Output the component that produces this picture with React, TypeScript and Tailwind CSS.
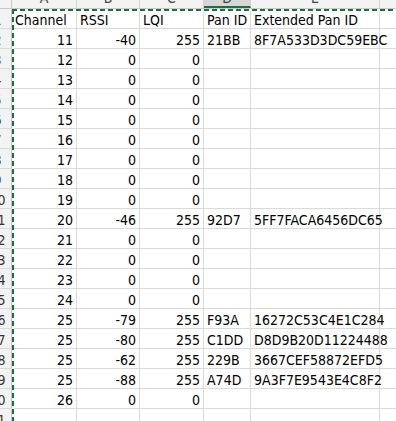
const COLS = [
  { key: 'A', w: 'w-[65px]', align: 'right' },
  { key: 'B', w: 'w-[63px]', align: 'right' },
  { key: 'C', w: 'w-[64px]', align: 'right' },
  { key: 'D', w: 'w-[47px]', align: 'left' },
  { key: 'E', w: 'w-[129px]', align: 'left' },
  { key: 'F', w: 'w-[100px]', align: 'left' },
];

type Row = (string | number)[];

const rows: Row[] = [
  ['Channel', 'RSSI', 'LQI', 'Pan ID', 'Extended Pan ID'],
  [11, -40, 255, '21BB', '8F7A533D3DC59EBC'],
  [12, 0, 0],
  [13, 0, 0],
  [14, 0, 0],
  [15, 0, 0],
  [16, 0, 0],
  [17, 0, 0],
  [18, 0, 0],
  [19, 0, 0],
  [20, -46, 255, '92D7', '5FF7FACA6456DC65'],
  [21, 0, 0],
  [22, 0, 0],
  [23, 0, 0],
  [24, 0, 0],
  [25, -79, 255, 'F93A', '16272C53C4E1C284'],
  [25, -80, 255, 'C1DD', 'D8D9B20D11224488'],
  [25, -62, 255, '229B', '3667CEF58872EFD5'],
  [25, -88, 255, 'A74D', '9A3F7E9543E4C8F2'],
  [26, 0, 0],
  [],
];

export default function App() {
  return (
    <div className="relative w-[396px] h-[421px] overflow-hidden bg-white text-black font-['Liberation_Sans_Narrow','DejaVu_Sans_Condensed','Liberation_Sans',sans-serif]">
      {/* Column letters (scrolled so only their lower edge shows) */}
      <div className="flex h-[9px] overflow-hidden border-b border-[#c8c8c8] bg-[#f3f3f3]">
        <div className="w-[12px] shrink-0 border-r border-[#c8c8c8]" />
        {COLS.map((c) => (
          <div
            key={c.key}
            className={`${c.w} shrink-0 border-r border-[#d0d0d0] ${c.key === 'D' ? 'bg-[#d6d6d6] border-b-2 border-b-[#1e6e42]' : ''}`}
          >
            <div className="-mt-[12px] h-[20px] flex items-center justify-center text-[14px] text-[#444]">
              {c.key}
            </div>
          </div>
        ))}
      </div>

      {/* Grid */}
      {rows.map((row, i) => (
        <div key={i} className="flex h-[20px] border-b border-[#dadada]">
          <div className="w-[12px] shrink-0 overflow-hidden bg-[#f3f3f3] border-r border-[#c8c8c8]">
            <div className="-ml-[18px] w-[31px] h-full flex items-end justify-center leading-[16px] text-[14px] text-[#333]">
              {i + 1}
            </div>
          </div>
          {COLS.map((c, j) => {
            const v = row[j];
            return (
              <div
                key={c.key}
                className={`${c.w} shrink-0 h-full border-r border-[#dadada] flex items-end whitespace-nowrap leading-[16px] text-[14px] ${
                  c.align === 'right' && i > 0 ? 'justify-end pr-[3px]' : 'justify-start pl-[3px]'
                }`}
              >
                {v === undefined ? '' : v}
              </div>
            );
          })}
        </div>
      ))}

      {/* Copy marquee */}
      <div className="absolute left-[12px] top-[9px] w-[2px] h-[420px] bg-[repeating-linear-gradient(to_bottom,#1e6e42_0_5px,#ffffff_5px_8px)]" />
      <div className="absolute left-[12px] top-[9px] h-[2px] w-[390px] bg-[repeating-linear-gradient(to_right,#1e6e42_0_5px,#ffffff_5px_8px)]" />
    </div>
  );
}
